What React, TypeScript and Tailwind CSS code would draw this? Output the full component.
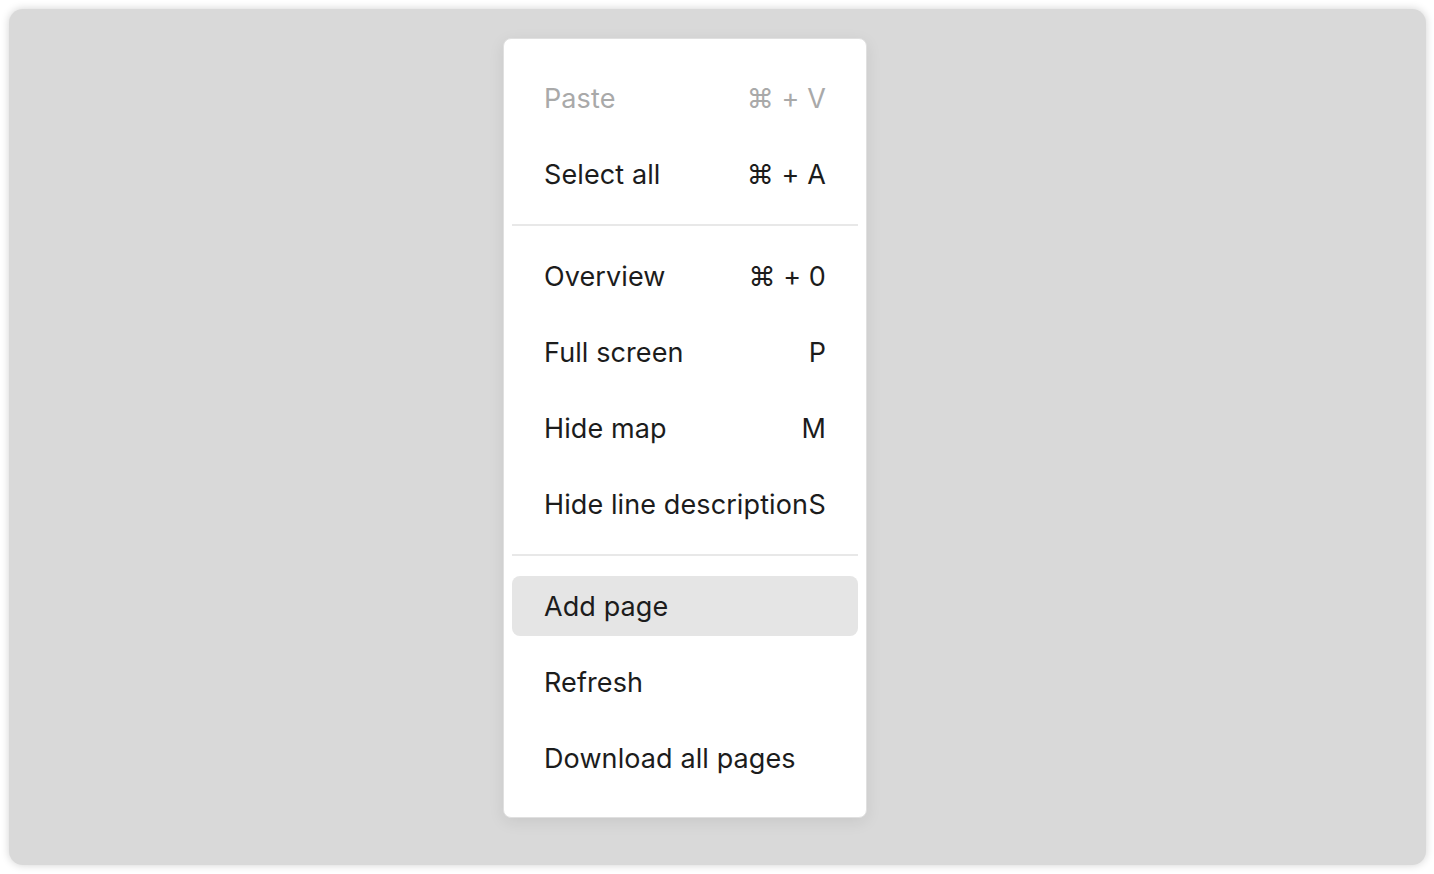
import React from "react";

type Item = { label: string; shortcut?: string; disabled?: boolean; active?: boolean };

const groups: Item[][] = [
  [
    { label: "Paste", shortcut: "⌘ + V", disabled: true },
    { label: "Select all", shortcut: "⌘ + A" },
  ],
  [
    { label: "Overview", shortcut: "⌘ + 0" },
    { label: "Full screen", shortcut: "P" },
    { label: "Hide map", shortcut: "M" },
    { label: "Hide line description", shortcut: "S" },
  ],
  [
    { label: "Add page", active: true },
    { label: "Refresh" },
    { label: "Download all pages" },
  ],
];

function MenuRow({ item }: { item: Item }) {
  return (
    <div
      className={
        "flex h-[60px] items-center justify-between rounded-lg px-8 pt-[2px] " +
        (item.active ? "bg-[#e5e5e5] " : "") +
        (item.disabled ? "text-[#a9a9a9]" : "text-[#1c1c1c]")
      }
    >
      <span className="whitespace-nowrap">{item.label}</span>
      {item.shortcut && <span className="whitespace-nowrap">{item.shortcut}</span>}
    </div>
  );
}

export default function App() {
  return (
    <div className="h-screen w-full bg-white p-[9px] pr-[8px]">
      <div
        className="h-full w-full rounded-[14px] bg-[#d9d9d9] pl-[494px] pt-[29px] shadow-[0_0_8px_rgba(0,0,0,0.18)]"
        style={{ fontFamily: "Inter, 'DejaVu Sans', sans-serif" }}
      >
        <div className="flex w-[364px] flex-col gap-4 rounded-lg border border-[#e0e0e0] bg-white px-2 py-[29px] text-[27px] tracking-[0.1px] shadow-[0_4px_16px_rgba(0,0,0,0.08)]">
          {groups.map((g, gi) => (
            <React.Fragment key={gi}>
              {gi > 0 && <div className="my-1 h-[2px] bg-[#e8e8e8]" />}
              {g.map((it) => (
                <MenuRow key={it.label} item={it} />
              ))}
            </React.Fragment>
          ))}
        </div>
      </div>
    </div>
  );
}
